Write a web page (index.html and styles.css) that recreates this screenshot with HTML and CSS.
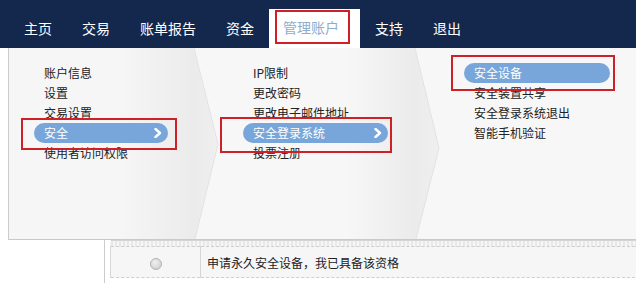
FILE: index.html
```html
<!DOCTYPE html>
<html lang="zh-CN">
<head>
<meta charset="utf-8">
<title>管理账户</title>
<link rel="stylesheet" href="styles.css">
</head>
<body>
<header class="nav">
  <ul class="nav-list">
    <li class="nav-item">主页</li>
    <li class="nav-item">交易</li>
    <li class="nav-item">账单报告</li>
    <li class="nav-item">资金</li>
    <li class="nav-item active"><span class="mark-nav">管理账户</span></li>
    <li class="nav-item">支持</li>
    <li class="nav-item">退出</li>
  </ul>
</header>

<div class="menu">
  <div class="col col1">
    <ul class="items">
      <li>账户信息</li>
      <li>设置</li>
      <li>交易设置</li>
      <li class="pill pill1 has-mark mark1">安全<svg class="arrow" viewBox="0 0 8 10" width="8" height="10"><path d="M1.5 1 L6 5 L1.5 9" fill="none" stroke="#fff" stroke-width="2.4" stroke-linejoin="round" stroke-linecap="round"/></svg></li>
      <li>使用者访问权限</li>
    </ul>
  </div>
  <svg class="sep" viewBox="0 0 26 191" width="26" height="191" preserveAspectRatio="none">
    <defs>
      <linearGradient id="g1" x1="0" y1="0" x2="1" y2="0">
        <stop offset="0" stop-color="#ebebeb"/>
        <stop offset="1" stop-color="#efefef"/>
      </linearGradient>
    </defs>
    <path d="M0 0 L24 96 L1 191 L0 191 Z" fill="url(#g1)"/>
    <path d="M0 0 L24 96 L1 191" fill="none" stroke="#e2e2e2" stroke-width="1"/>
  </svg>
  <div class="col col2">
    <ul class="items">
      <li>IP限制</li>
      <li>更改密码</li>
      <li>更改电子邮件地址</li>
      <li class="pill pill2 has-mark mark2">安全登录系统<svg class="arrow" viewBox="0 0 8 10" width="8" height="10"><path d="M1.5 1 L6 5 L1.5 9" fill="none" stroke="#fff" stroke-width="2.4" stroke-linejoin="round" stroke-linecap="round"/></svg></li>
      <li>投票注册</li>
    </ul>
  </div>
  <svg class="sep" viewBox="0 0 26 191" width="26" height="191" preserveAspectRatio="none">
    <defs>
      <linearGradient id="g2" x1="0" y1="0" x2="1" y2="0">
        <stop offset="0" stop-color="#ebebeb"/>
        <stop offset="1" stop-color="#efefef"/>
      </linearGradient>
    </defs>
    <path d="M0 0 L24 100 L1 191 L0 191 Z" fill="url(#g2)"/>
    <path d="M0 0 L24 100 L1 191" fill="none" stroke="#e2e2e2" stroke-width="1"/>
  </svg>
  <div class="col col3">
    <ul class="items">
      <li class="pill pill3 has-mark mark3">安全设备</li>
      <li>安全装置共享</li>
      <li>安全登录系统退出</li>
      <li>智能手机验证</li>
    </ul>
  </div>
</div>

<main class="content">
  <table class="grid">
    <tr class="head-strip"><td colspan="2"></td></tr>
    <tr class="row">
      <td class="cell-radio"><span class="radio"></span></td>
      <td class="cell-text">申请永久安全设备，我已具备该资格</td>
    </tr>
  </table>
</main>
</body>
</html>
```

FILE: styles.css
```css
html, body {
  margin: 0;
  padding: 0;
  background: #ffffff;
  overflow: hidden;
}

body {
  width: 636px;
  height: 283px;
  position: relative;
  font-family: "Noto Sans CJK SC", "Liberation Sans", sans-serif;
  color: #222222;
}

ul {
  list-style: none;
  margin: 0;
  padding: 0;
}

/* ---------- navigation ---------- */
.nav {
  height: 48px;
  background: #14284e;
}

.nav-list {
  display: flex;
  height: 48px;
  padding-left: 9px;
}

.nav-item {
  padding: 0 15px;
  height: 48px;
  line-height: 56px;
  font-size: 14px;
  color: #ffffff;
  white-space: nowrap;
}

.nav-item.active {
  margin-top: 9px;
  height: 39px;
  background: #ffffff;
  color: #8eaccb;
  padding: 1px 10px 0 6px;
  line-height: 33px;
  box-sizing: border-box;
}

.mark-nav {
  display: block;
  width: 65px;
  height: 30px;
  padding-left: 6px;
  border: 2px solid #cf2027;
  line-height: 30px;
}

/* ---------- dropdown menu (overlay) ---------- */
.menu {
  position: absolute;
  top: 48px;
  left: 8px;
  width: 640px;
  height: 191px;
  display: flex;
  background: #f6f6f6;
  border-left: 1px solid #cccccc;
  border-bottom: 1px solid #c9c9c9;
  z-index: 2;
}

.col {
  box-sizing: border-box;
  padding-top: 15px;
  height: 191px;
}

.col1 {
  width: 185px;
  padding-left: 35px;
  background: linear-gradient(to right, #f6f6f6 0, #f6f6f6 60%, #ebebeb 100%);
}

.col2 {
  width: 195px;
  padding-left: 33px;
  background: linear-gradient(to right, #f7f7f7 0, #f7f7f7 65%, #ebebeb 100%);
}

.col3 {
  flex: 1;
  padding-left: 33px;
  background: #f7f7f7;
}

.sep {
  flex: none;
  display: block;
  background: #f7f7f7;
}

.items li {
  height: 20px;
  line-height: 20px;
  font-size: 12px;
  white-space: nowrap;
}

.pill {
  position: relative;
  display: flex;
  align-items: center;
  justify-content: space-between;
  box-sizing: border-box;
  margin-left: -10px;
  padding: 0 6px 0 10px;
  background: #78a6da;
  color: #ffffff;
  border-radius: 10px;
}

.pill1 { width: 134px; }
.pill2 { width: 145px; }
.pill3 { width: 146px; }

.arrow {
  display: block;
}

/* red annotation boxes */
.has-mark::after {
  content: "";
  position: absolute;
  border: 2px solid #cf2027;
}

.mark1::after { top: -5px; bottom: -7px; left: -13px; right: -9px; }
.mark2::after { top: -6px; bottom: -10px; left: -23px; right: -4px; }
.mark3::after { top: -8px; bottom: -8px; left: -13px; right: -5px; }

/* ---------- page content ---------- */
.content {
  box-sizing: border-box;
  margin-left: 104px;
  height: 235px;
  padding-top: 192px;
  padding-left: 5px;
  border-left: 1px solid #cccccc;
  overflow: hidden;
}

.grid {
  border-collapse: collapse;
  width: 540px;
  background: #f6f6f6;
}

.head-strip td {
  height: 5px;
  padding: 0;
  border-top: 1px solid #d4d4d4;
  background: repeating-linear-gradient(90deg, #e8e8e8 0 2px, #f6f6f6 2px 4px);
}

.row td {
  height: 30px;
  padding: 0;
  border-top: 1px dashed #cfcfcf;
  border-bottom: 1px dashed #cfcfcf;
  font-size: 12px;
}

.cell-radio {
  width: 89px;
  text-align: center;
  border-left: 1px solid #d6d6d6;
  border-right: 1px solid #d6d6d6;
}

.cell-text {
  padding-left: 6px !important;
}

.radio {
  display: inline-block;
  vertical-align: middle;
  width: 10px;
  height: 10px;
  border-radius: 50%;
  border: 1px solid #b4b4b4;
  background: radial-gradient(circle at 40% 35%, #f0f0f0 0, #d4d4d4 70%);
}
```
